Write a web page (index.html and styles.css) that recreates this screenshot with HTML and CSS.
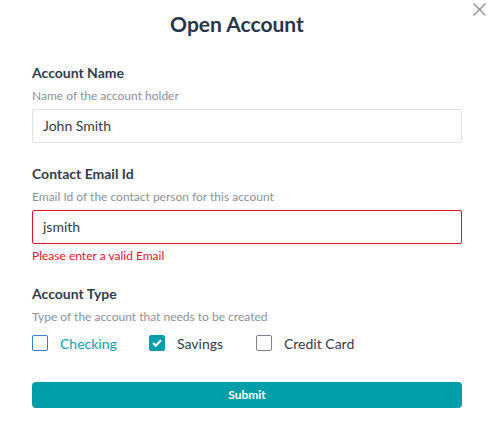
FILE: index.html
```html
<!DOCTYPE html>
<html>
<head>
<meta charset="utf-8">
<link rel="stylesheet" href="styles.css">
</head>
<body>
<div class="modal">
  <button class="close" aria-label="Close">
    <svg width="13" height="13" viewBox="0 0 13 13"><path d="M0.5 0.5L12.5 12.5M12.5 0.5L0.5 12.5" stroke="#8a9099" stroke-width="1.3" fill="none"/></svg>
  </button>
  <h1 class="title">Open Account</h1>
  <form class="form">
    <div class="field">
      <label class="label">Account Name</label>
      <div class="help">Name of the account holder</div>
      <div class="input">John Smith</div>
    </div>
    <div class="field">
      <label class="label">Contact Email Id</label>
      <div class="help">Email Id of the contact person for this account</div>
      <div class="input error">jsmith</div>
      <div class="errmsg">Please enter a valid Email</div>
    </div>
    <div class="field">
      <label class="label">Account Type</label>
      <div class="help">Type of the account that needs to be created</div>
      <div class="checks">
        <div class="check focus"><span class="box"></span><span class="ctext teal">Checking</span></div>
        <div class="check"><span class="box on"><svg width="10" height="8" viewBox="0 0 10 8"><path d="M1 4L3.8 6.6L9 1.2" stroke="#fff" stroke-width="2.2" fill="none"/></svg></span><span class="ctext">Savings</span></div>
        <div class="check"><span class="box"></span><span class="ctext">Credit Card</span></div>
      </div>
    </div>
    <div class="submit">Submit</div>
  </form>
</div>
</body>
</html>
```
FILE: styles.css
```css
* { box-sizing: border-box; }
body { margin: 0; background: #fff; font-family: Lato, "Noto Sans", sans-serif; color: #333c4b; }
.modal { position: relative; width: 497px; height: 441px; padding: 0 35px 0 32px; }
.close { position: absolute; right: 11px; top: 3px; border: 0; background: none; padding: 0; width: 13px; height: 13px; }
.close svg { display: block; }
.title { margin: 0; padding-top: 10px; padding-right: 20px; text-align: center; font-size: 21px; font-weight: 700; color: #2b3549; line-height: 28px; }
.form { margin-top: 26px; }
.field { margin-bottom: 22px; }
.label { display: block; font-size: 14px; font-weight: 700; line-height: 17px; color: #333c4b; }
.help { font-size: 12px; line-height: 15px; color: #8c919a; margin-top: 7px; }
.input { margin-top: 6px; height: 34px; border: 1px solid #e1e4e8; border-radius: 2px; padding: 0 10px; font-size: 14px; line-height: 32px; color: #333c4b; }
.input.error { border-color: #e8112d; }
.errmsg { font-size: 12px; line-height: 15px; color: #e8112d; margin-top: 4px; }
.checks { display: flex; margin-top: 10px; }
.check { display: flex; align-items: center; height: 18px; }
.check:nth-child(1) { width: 117px; }
.check:nth-child(2) { width: 107px; }
.box { width: 16px; height: 16px; border: 1px solid #7d838d; border-radius: 2px; display: flex; align-items: center; justify-content: center; }
.focus .box { border-color: #2f7ee0; }
.box.on { background: #009eab; border-color: #009eab; }
.ctext { margin-left: 12px; font-size: 14px; color: #333c4b; }
.ctext.teal { color: #12a0ae; }
.submit { margin-top: 30px; height: 26px; border-radius: 4px; background: #009ea9; color: #fff; font-size: 12px; font-weight: 700; text-align: center; line-height: 26px; }
```
